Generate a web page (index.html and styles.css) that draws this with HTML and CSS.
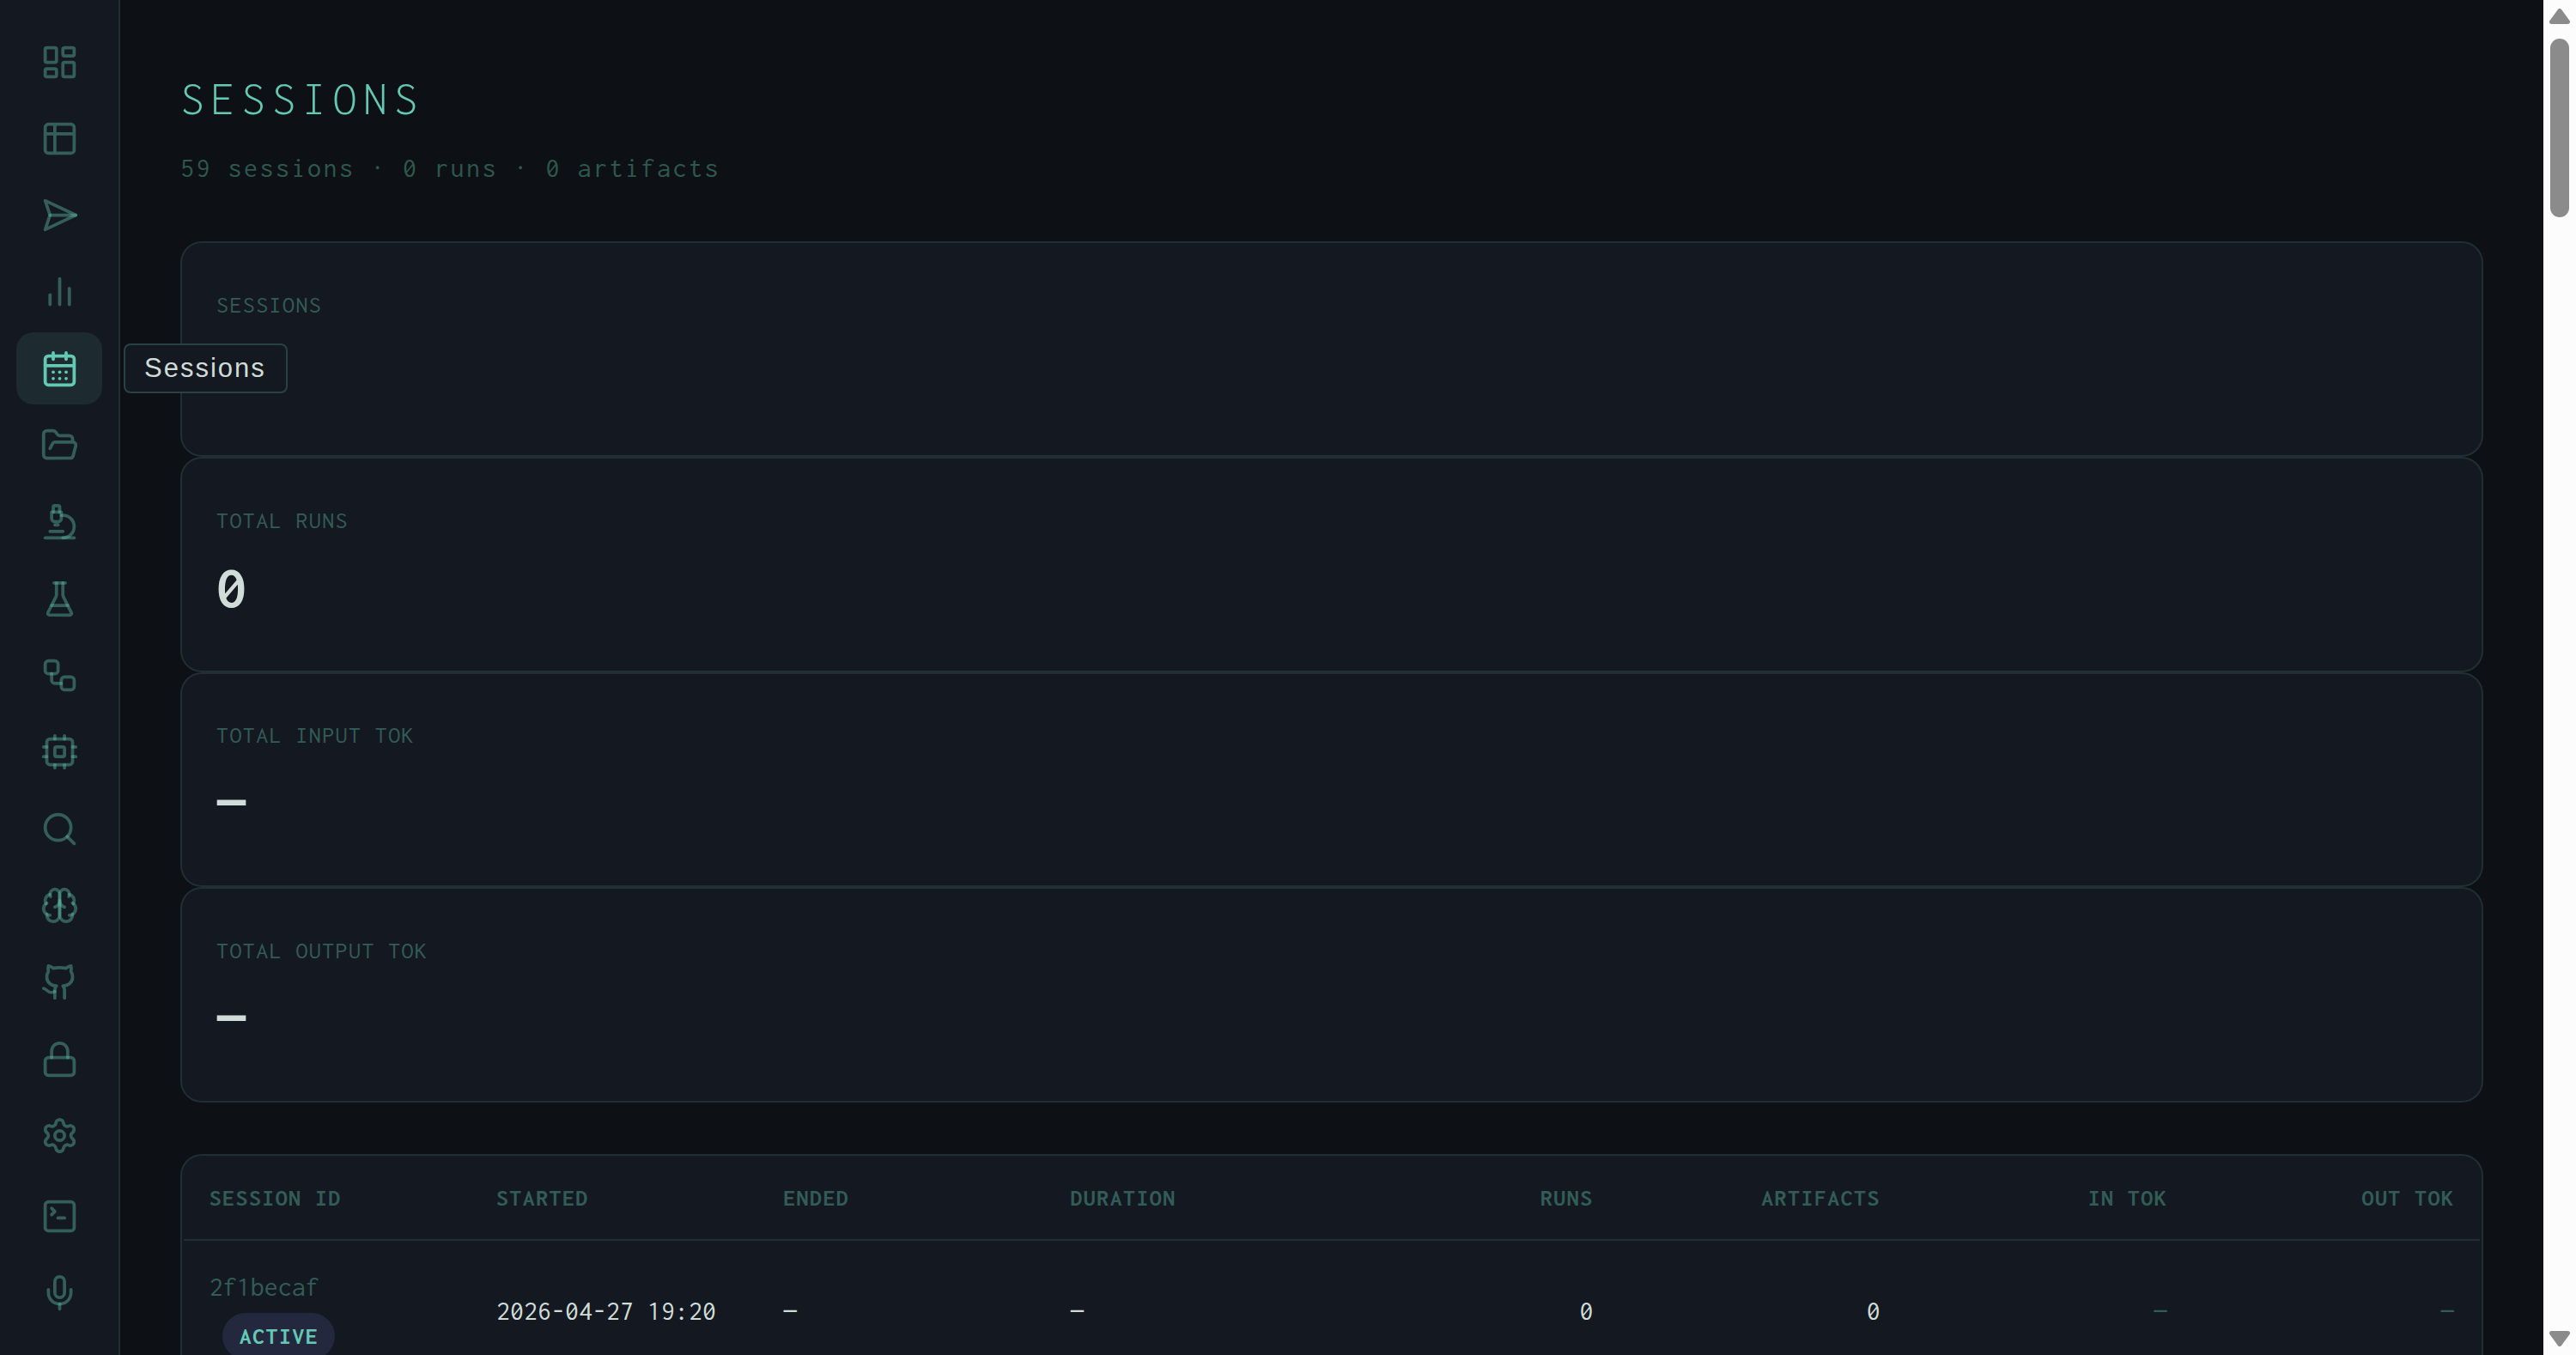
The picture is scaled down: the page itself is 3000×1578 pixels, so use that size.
FILE: index.html
```
<!DOCTYPE html>
<html lang="en">
<head>
<meta charset="utf-8">
<title>Sessions</title>
<link rel="stylesheet" href="styles.css">
</head>
<body>
<nav class="sidebar">
  <a class="item"><svg viewBox="0 0 24 24"><rect x="3" y="3" width="7" height="9" rx="1"/><rect x="14" y="3" width="7" height="5" rx="1"/><rect x="14" y="12" width="7" height="9" rx="1"/><rect x="3" y="16" width="7" height="5" rx="1"/></svg></a>
  <a class="item"><svg viewBox="0 0 24 24"><path d="M9 3H5a2 2 0 0 0-2 2v4m6-6h10a2 2 0 0 1 2 2v4M9 3v18m0 0h10a2 2 0 0 0 2-2V9M9 21H5a2 2 0 0 1-2-2V9m0 0h18"/></svg></a>
  <a class="item"><svg viewBox="0 0 24 24"><path d="m3 3 3 9-3 9 19-9Z"/><path d="M6 12h16"/></svg></a>
  <a class="item"><svg viewBox="0 0 24 24"><path d="M18 20V10"/><path d="M12 20V4"/><path d="M6 20v-6"/></svg></a>
  <a class="item active"><svg viewBox="0 0 24 24"><path d="M8 2v4"/><path d="M16 2v4"/><rect x="3" y="4" width="18" height="18" rx="2"/><path d="M3 10h18"/><path d="M8 14h.01"/><path d="M12 14h.01"/><path d="M16 14h.01"/><path d="M8 18h.01"/><path d="M12 18h.01"/><path d="M16 18h.01"/></svg><span class="tooltip">Sessions</span></a>
  <a class="item"><svg viewBox="0 0 24 24"><path d="m6 14 1.5-2.9A2 2 0 0 1 9.24 10H20a2 2 0 0 1 1.94 2.5l-1.54 6a2 2 0 0 1-1.95 1.5H4a2 2 0 0 1-2-2V5a2 2 0 0 1 2-2h3.9a2 2 0 0 1 1.69.9l.81 1.2a2 2 0 0 0 1.67.9H18a2 2 0 0 1 2 2v2"/></svg></a>
  <a class="item"><svg viewBox="0 0 24 24"><path d="M6 18h8"/><path d="M3 22h18"/><path d="M14 22a7 7 0 1 0 0-14h-1"/><path d="M9 14h2"/><path d="M9 12a2 2 0 0 1-2-2V6h6v4a2 2 0 0 1-2 2Z"/><path d="M12 6V3a1 1 0 0 0-1-1H9a1 1 0 0 0-1 1v3"/></svg></a>
  <a class="item"><svg viewBox="0 0 24 24"><path d="M10 2v7.527a2 2 0 0 1-.211.896L4.72 20.55a1 1 0 0 0 .9 1.45h12.76a1 1 0 0 0 .9-1.45l-5.069-10.127A2 2 0 0 1 14 9.527V2"/><path d="M8.5 2h7"/><path d="M7 16h10"/></svg></a>
  <a class="item"><svg viewBox="0 0 24 24"><rect x="3" y="3" width="8" height="8" rx="2"/><path d="M7 11v4a2 2 0 0 0 2 2h4"/><rect x="13" y="13" width="8" height="8" rx="2"/></svg></a>
  <a class="item"><svg viewBox="0 0 24 24"><rect x="4" y="4" width="16" height="16" rx="2"/><rect x="9" y="9" width="6" height="6" rx="1"/><path d="M15 2v2"/><path d="M15 20v2"/><path d="M2 15h2"/><path d="M2 9h2"/><path d="M20 15h2"/><path d="M20 9h2"/><path d="M9 2v2"/><path d="M9 20v2"/></svg></a>
  <a class="item"><svg viewBox="0 0 24 24"><circle cx="11" cy="11" r="8"/><path d="m21 21-4.3-4.3"/></svg></a>
  <a class="item"><svg viewBox="0 0 24 24"><path d="M12 5a3 3 0 1 0-5.997.125 4 4 0 0 0-2.526 5.77 4 4 0 0 0 .556 6.588A4 4 0 1 0 12 18Z"/><path d="M12 5a3 3 0 1 1 5.997.125 4 4 0 0 1 2.526 5.77 4 4 0 0 1-.556 6.588A4 4 0 1 1 12 18Z"/><path d="M15 13a4.5 4.5 0 0 1-3-4 4.5 4.5 0 0 1-3 4"/><path d="M17.599 6.5a3 3 0 0 0 .399-1.375"/><path d="M6.003 5.125A3 3 0 0 0 6.401 6.5"/><path d="M3.477 10.896a4 4 0 0 1 .585-.396"/><path d="M19.938 10.5a4 4 0 0 1 .585.396"/><path d="M6 18a4 4 0 0 1-1.967-.516"/><path d="M19.967 17.484A4 4 0 0 1 18 18"/></svg></a>
  <a class="item"><svg viewBox="0 0 24 24"><path d="M15 22v-4a4.8 4.8 0 0 0-1-3.5c3 0 6-2 6-5.5.08-1.25-.27-2.48-1-3.5.28-1.15.28-2.35 0-3.5 0 0-1 0-3 1.5-2.64-.5-5.36-.5-8 0C6 2 5 2 5 2c-.3 1.15-.3 2.35 0 3.5A5.403 5.403 0 0 0 4 9c0 3.5 3 5.5 6 5.5-.39.49-.68 1.05-.85 1.65-.17.6-.22 1.23-.15 1.85v4"/><path d="M9 18c-4.51 2-5-2-7-2"/></svg></a>
  <a class="item"><svg viewBox="0 0 24 24"><rect x="3" y="11" width="18" height="11" rx="2"/><path d="M7 11V7a5 5 0 0 1 10 0v4"/></svg></a>
  <a class="item"><svg viewBox="0 0 24 24"><path d="M9.671 4.136a2.34 2.34 0 0 1 4.659 0 2.34 2.34 0 0 0 3.319 1.915 2.34 2.34 0 0 1 2.33 4.033 2.34 2.34 0 0 0 0 3.831 2.34 2.34 0 0 1-2.33 4.033 2.34 2.34 0 0 0-3.319 1.915 2.34 2.34 0 0 1-4.659 0 2.34 2.34 0 0 0-3.32-1.915 2.34 2.34 0 0 1-2.33-4.033 2.34 2.34 0 0 0 0-3.831A2.34 2.34 0 0 1 6.35 6.051a2.34 2.34 0 0 0 3.319-1.915"/><circle cx="12" cy="12" r="3"/></svg></a>
  <a class="item tool"><svg viewBox="0 0 24 24"><path d="m7 11 2-2-2-2"/><path d="M11 13h4"/><rect x="3" y="3" width="18" height="18" rx="2"/></svg></a>
  <a class="item"><svg viewBox="0 0 24 24"><path d="M12 19v3"/><path d="M19 10v2a7 7 0 0 1-14 0v-2"/><rect x="9" y="2" width="6" height="13" rx="3"/></svg></a>
</nav>
<main class="page">
  <h1 class="title">SESSIONS</h1>
  <p class="subtitle">59 sessions · 0 runs · 0 artifacts</p>
  <section class="stats">
    <div class="card"><div class="label">SESSIONS</div><div class="value"></div></div>
    <div class="card"><div class="label">TOTAL RUNS</div><div class="value">0</div></div>
    <div class="card"><div class="label">TOTAL INPUT TOK</div><div class="value">—</div></div>
    <div class="card"><div class="label">TOTAL OUTPUT TOK</div><div class="value">—</div></div>
  </section>
  <section class="table">
    <div class="row head">
      <div>SESSION ID</div><div>STARTED</div><div>ENDED</div><div>DURATION</div><div class="num">RUNS</div><div class="num">ARTIFACTS</div><div class="num">IN TOK</div><div class="num">OUT TOK</div>
    </div>
    <div class="row body">
      <div class="id">2f1becaf<span class="badge">ACTIVE</span></div><div>2026-04-27 19:20</div><div>—</div><div>—</div><div class="num">0</div><div class="num">0</div><div class="num dim">—</div><div class="num dim">—</div>
    </div>
  </section>
</main>
<div class="scrollbar">
  <svg class="arrow" viewBox="0 0 24 18"><path d="M12 2.5 21.5 15.5H2.5Z"/></svg>
  <div class="thumb"></div>
  <svg class="arrow down" viewBox="0 0 24 18"><path d="M12 15.5 21.5 2.5H2.5Z"/></svg>
</div>
</body>
</html>
```
FILE: styles.css
```
* { box-sizing: border-box; }

body {
  margin: 0;
  height: 1578px;
  display: flex;
  overflow: hidden;
  background: #0d1014;
  color: #cfdcd7;
  font-family: Inconsolata, "Liberation Mono", monospace;
  font-weight: 430;
  line-height: 1;
}

/* Sidebar */
.sidebar {
  flex: none;
  width: 140px;
  padding: 30px 19px 0;
  display: flex;
  flex-direction: column;
  gap: 5.34px;
  background: #141820;
  border-right: 2px solid #1f2f34;
}
.item {
  position: relative;
  flex: none;
  width: 100px;
  height: 84px;
  display: flex;
  align-items: center;
  justify-content: center;
  border-radius: 20px;
  color: rgba(99, 201, 181, 0.4);
}
.item svg {
  width: 45px;
  height: 45px;
  margin-left: 1px;
  fill: none;
  stroke: currentColor;
  stroke-width: 2;
  stroke-linecap: round;
  stroke-linejoin: round;
}
.item.active { background: #1d2a2f; color: #63c9b5; }
.item.tool { margin-top: 4.7px; }
.tooltip {
  position: absolute;
  z-index: 2;
  left: 125px;
  top: 13px;
  width: 191px;
  height: 58px;
  display: flex;
  align-items: center;
  padding: 0 0 1px 22px;
  border: 2px solid #284144;
  border-radius: 8px;
  background: #141820;
  color: #cfdcd7;
  font-family: "Liberation Sans", Arial, sans-serif;
  font-size: 31px;
  font-weight: 400;
  letter-spacing: 2px;
}

/* Page */
.page { flex: 1; min-width: 0; height: 1578px; overflow: hidden; padding: 87px 70px 0; }
.title {
  margin: 0;
  color: #63c9b5;
  font-size: 56px;
  font-weight: 330;
  letter-spacing: 7.5px;
}
.subtitle {
  margin: 37px 0 0;
  color: #2d584d;
  font-size: 32px;
  letter-spacing: 2.5px;
}
.stats { margin-top: 69px; }
.card {
  height: 250.75px;
  padding: 57.8px 40px 0;
  background: #141820;
  border: 2px solid #1f2f34;
  border-radius: 25px;
}
.label { color: #325c57; font-size: 28px; letter-spacing: 1.4px; }
.value { margin-top: 29px; font-size: 70px; font-weight: 650; }

/* Sessions table */
.table {
  height: 400px;
  margin-top: 60px;
  padding: 0 2px;
  background: #141820;
  border: 2px solid #1f2f34;
  border-radius: 25px;
}
.row { display: grid; grid-template-columns: repeat(8, 1fr); align-items: center; }
.row > div { padding: 0 29.7px; white-space: nowrap; }
.row > .num { text-align: right; }
.head {
  height: 99px;
  border-bottom: 2px solid #1f2f34;
  color: #325c57;
  font-size: 28px;
  font-weight: 650;
  letter-spacing: 1.4px;
}
.body { height: 164px; font-size: 32px; }
.id { display: flex; flex-direction: column; align-items: flex-start; gap: 14px; margin-top: 12px; }
.id, .dim { color: #325c57; }
.badge {
  margin-left: 15px;
  padding: 13px 19px 13px 20px;
  border-radius: 28px;
  background: #24283e;
  color: #63c9b5;
  font-size: 28px;
  font-weight: 650;
  letter-spacing: 1.4px;
}

/* Scrollbar */
.scrollbar {
  flex: none;
  width: 38px;
  height: 1578px;
  padding: 10px 0;
  display: flex;
  flex-direction: column;
  align-items: center;
  background: #fcfcfc;
}
.arrow { width: 24px; height: 18px; fill: #8b8b8b; stroke: #8b8b8b; stroke-width: 5; stroke-linejoin: round; }
.thumb { width: 22px; height: 208px; margin-top: 17px; border-radius: 11px; background: #8b8b8b; }
.arrow.down { margin-top: auto; }
```
